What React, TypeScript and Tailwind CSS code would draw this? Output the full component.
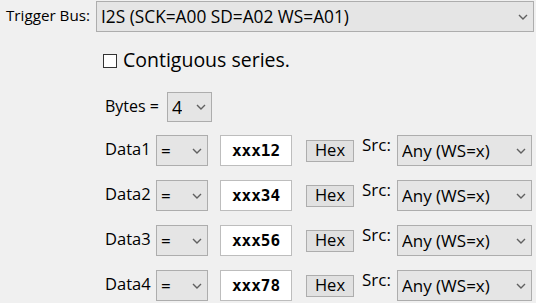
import React from 'react';

const Chevron = () => (
  <svg width="10" height="6" viewBox="0 0 10 6" className="shrink-0">
    <path d="M1 1 L5 5 L9 1" fill="none" stroke="#606060" strokeWidth="1.4" />
  </svg>
);

function Combo({ value, className }: { value: string; className: string }) {
  return (
    <div
      className={`flex items-center justify-between border border-[#adadad] bg-[#e5e5e5] pl-[4px] pr-[5px] ${className}`}
    >
      <span className="truncate">{value}</span>
      <Chevron />
    </div>
  );
}

const rows = [
  { label: 'Data1', value: 'xxx12' },
  { label: 'Data2', value: 'xxx34' },
  { label: 'Data3', value: 'xxx56' },
  { label: 'Data4', value: 'xxx78' },
];

export default function App() {
  return (
    <div className="w-[536px] h-[303px] overflow-hidden bg-[#f0f0f0] text-[15px] text-black font-['Open_Sans',sans-serif]">
      {/* bus selector */}
      <div className="flex items-center pt-[1px]">
        <span className="w-[96px] pl-[6px] text-[15.2px] -mt-[2px]">Trigger Bus:</span>
        <Combo value="I2S (SCK=A00 SD=A02 WS=A01)" className="w-[438px] h-[31px] text-[17.3px]" />
      </div>

      <label className="mt-[19px] ml-[103px] h-[20px] flex items-center gap-[6px]">
        <span className="w-[14px] h-[14px] border border-[#333] bg-white" />
        <span className="text-[19.5px] leading-none -mt-[3px]">Contiguous series.</span>
      </label>

      <div className="mt-[21px] ml-[105px] flex items-center h-[30px]">
        <span className="w-[62px] text-[16px] -mt-[2px]">Bytes =</span>
        <Combo value="4" className="w-[45px] h-[30px] text-[18px]" />
      </div>

      <div className="mt-[13px] flex flex-col gap-[14px]">
        {rows.map((r) => (
          <div key={r.label} className="flex items-center h-[31px]">
            <span className="ml-[105px] w-[51px] -mt-[3px] text-[16.5px]">{r.label}</span>
            <Combo value="=" className="w-[52px] h-[31px] text-[17px]" />
            <div className="ml-[12px] w-[72px] h-[31px] flex items-center justify-center border border-[#bdbdbd] bg-white font-['DejaVu_Sans_Mono',monospace] font-bold text-[16px]">
              {r.value}
            </div>
            <button className="ml-[14px] w-[48px] h-[22px] flex items-center justify-center border border-[#adadad] bg-[#e1e1e1] text-[16.5px] leading-none">
              Hex
            </button>
            <span className="ml-[8px] w-[35px] self-start mt-[1px] text-[17px] leading-[18px]">Src:</span>
            <Combo value="Any (WS=x)" className="w-[135px] h-[31px] text-[17px]" />
          </div>
        ))}
      </div>
    </div>
  );
}
